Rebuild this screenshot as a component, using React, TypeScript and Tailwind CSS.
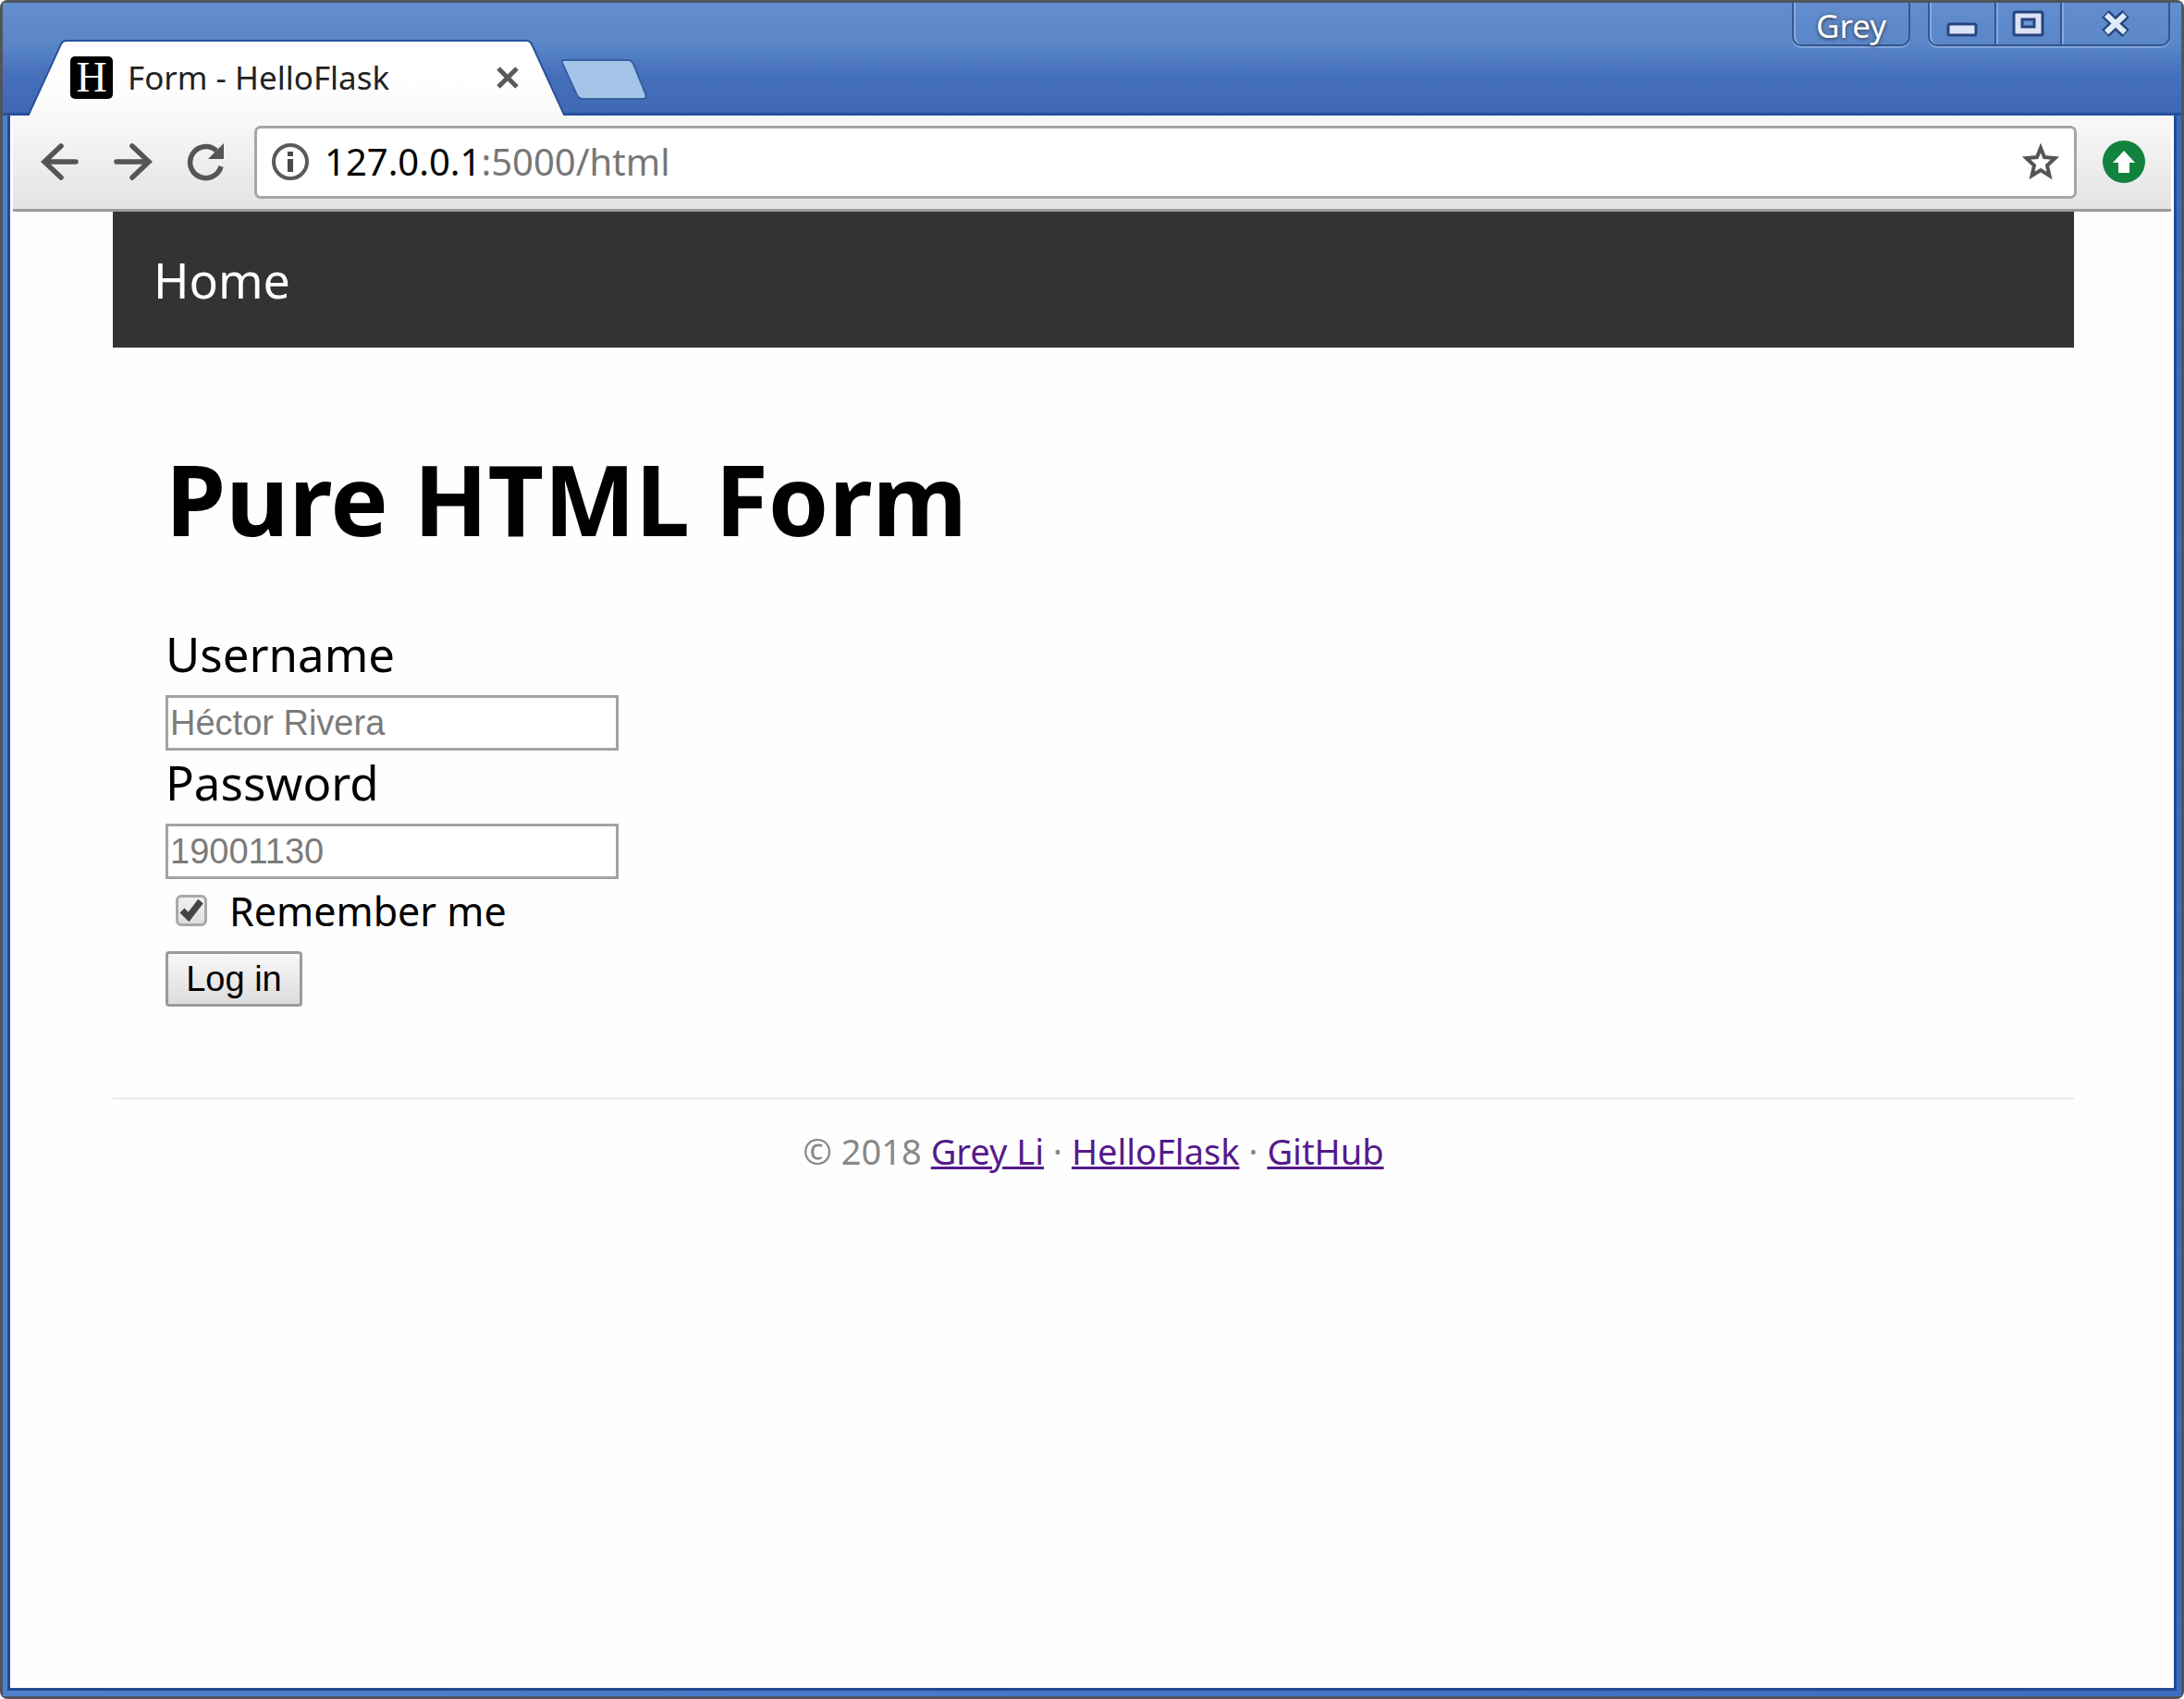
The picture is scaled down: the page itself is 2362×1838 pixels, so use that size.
import { useState } from "react";

const sans = "font-['Noto_Sans','Open_Sans',sans-serif]";

function TabShape() {
  return (
    <svg
      className="absolute inset-0 h-full w-full"
      viewBox="0 0 584 82"
      preserveAspectRatio="none"
      aria-hidden="true"
    >
      <defs>
        <linearGradient id="tabFill" x1="0" y1="0" x2="0" y2="1">
          <stop offset="0" stopColor="#ffffff" />
          <stop offset="0.5" stopColor="#ffffff" />
          <stop offset="1" stopColor="#f9f9f9" />
        </linearGradient>
      </defs>
      <path
        d="M2 82 L36 7 Q38 2 43 2 H540 Q545 2 547 7 L582 82 Z"
        fill="url(#tabFill)"
      />
      <path
        d="M0 81 H2 L36 7 Q38 1 43 1 H540 Q545 1 547 7 L581 81 H584"
        fill="none"
        stroke="#27519c"
        strokeWidth="2"
      />
    </svg>
  );
}

function Tab() {
  return (
    <div className="relative flex h-[82px] w-[584px] items-center pl-[47px] pr-[50px]">
      <TabShape />
      <span className="relative flex size-[46px] shrink-0 items-center justify-center rounded-[5px] bg-black font-['Liberation_Serif',serif] text-[46px] leading-[46px] text-white">
        H
      </span>
      <span className="relative ml-4 flex-1 whitespace-nowrap text-[35px] leading-[46px] text-[#222]">
        Form - HelloFlask
      </span>
      <button type="button" aria-label="Close tab" className="relative">
        <svg className="size-[28px]" viewBox="0 0 28 28" fill="none" stroke="#5a5a5a" strokeWidth="5">
          <path d="M4 4 L24 24 M24 4 L4 24" />
        </svg>
      </button>
    </div>
  );
}

function TitleBar() {
  return (
    <header className="flex h-[122px] items-end justify-between bg-[linear-gradient(#628ecf_0%,#5b87c9_35%,#446fba_65%,#4069b5_97%,#27519c_98%)] pl-[26px] pr-[12px]">
      <div className="flex items-end">
        <Tab />
        <button type="button" aria-label="New tab" className="mb-4 -ml-2">
          <svg className="h-[46px] w-[96px]" viewBox="0 0 96 46">
            <path
              d="M5 2 H74 Q78 2 80 6 L93 38 Q95 44 90 44 H26 Q21 44 19 40 L3 5 Q2 2 5 2 Z"
              fill="#a4c5e8"
              stroke="#34609f"
              strokeWidth="2"
            />
          </svg>
        </button>
      </div>
      <div className="flex items-start gap-[19px] self-start">
        <button
          type="button"
          className="h-[47px] w-[128px] rounded-b-[10px] border-2 border-t-0 border-[#34568f] pt-[5px] text-[35px] leading-[40px] text-white shadow-[0_2px_0_#7fa5dc,inset_2px_0_0_#86aae0] [text-shadow:0_1px_4px_#2c2c2c]"
        >
          Grey
        </button>
        <div className="flex h-[47px] rounded-b-[10px] border-2 border-t-0 border-[#34568f] shadow-[0_2px_0_#7fa5dc,inset_2px_0_0_#86aae0]">
          <button type="button" aria-label="Minimize" className="flex w-[70px] justify-center pt-[21px]">
            <svg className="h-[16px] w-[34px]" viewBox="0 0 34 16">
              <rect x="2" y="2" width="30" height="12" rx="2" fill="#dce3f6" stroke="#26457f" strokeWidth="3" />
            </svg>
          </button>
          <button
            type="button"
            aria-label="Maximize"
            className="flex w-[71px] justify-center border-l-2 border-[#34568f] pt-[8px] shadow-[inset_2px_0_0_#86aae0]"
          >
            <svg className="h-[29px] w-[35px]" viewBox="0 0 35 29">
              <rect x="2" y="2" width="31" height="25" rx="2" fill="#dce3f6" stroke="#26457f" strokeWidth="3" />
              <rect x="11" y="10" width="13" height="8" fill="#6b99d6" stroke="#26457f" strokeWidth="3" />
            </svg>
          </button>
          <button
            type="button"
            aria-label="Close"
            className="flex w-[117px] justify-center border-l-2 border-[#34568f] pt-[8px] shadow-[inset_2px_0_0_#86aae0]"
          >
            <svg className="h-[29px] w-[34px]" viewBox="0 0 34 29" fill="none">
              <path d="M6 4 L28 25 M28 4 L6 25" stroke="#26457f" strokeWidth="11" />
              <path d="M7 5 L27 24 M27 5 L7 24" stroke="#dcebf8" strokeWidth="6" />
            </svg>
          </button>
        </div>
      </div>
    </header>
  );
}

function Toolbar() {
  return (
    <div className="mx-[3px] flex h-[104px] items-center border-b-[3px] border-[#9b9b9b] bg-[linear-gradient(#f9f9f9,#e3e3e3)] pb-px pl-[29px] pr-[27px]">
      <nav className="flex gap-[35px]" aria-label="Browser">
        <button type="button" aria-label="Back">
          <svg
            className="size-[44px]"
            viewBox="0 0 44 44"
            fill="none"
            stroke="#555"
            strokeWidth="5.5"
            strokeLinecap="round"
          >
            <path d="M39 22 H6 M23 5 L5 22 L23 39" />
          </svg>
        </button>
        <button type="button" aria-label="Forward">
          <svg
            className="size-[44px]"
            viewBox="0 0 44 44"
            fill="none"
            stroke="#555"
            strokeWidth="5.5"
            strokeLinecap="round"
          >
            <path d="M4 22 H37 M21 5 L39 22 L21 39" />
          </svg>
        </button>
        <button type="button" aria-label="Reload">
          <svg className="size-[44px]" viewBox="0 0 44 44" fill="none">
            <path d="M33 10 A17 17 0 1 0 38 27" stroke="#555" strokeWidth="5.5" />
            <path d="M41 2 V19 H24 Z" fill="#555" />
          </svg>
        </button>
      </nav>
      <div className="ml-[30px] flex h-[79px] flex-1 items-center rounded-[7px] border-[3px] border-[#a5a5a5] bg-white pl-[15px] pr-[15px]">
        <svg className="size-[42px]" viewBox="0 0 42 42" fill="none">
          <circle cx="21" cy="21" r="18" stroke="#5a5a5a" strokeWidth="4" />
          <path d="M21 18 V32 M21 10 V15" stroke="#4a4a4a" strokeWidth="6" />
        </svg>
        <p className="ml-4 flex-1 text-[40px] leading-[54px] text-[#777]">
          <span className="text-black">127.0.0.1</span>:5000/html
        </p>
        <button type="button" aria-label="Bookmark this page">
          <svg className="size-[42px]" viewBox="0 0 42 42" fill="none" stroke="#555" strokeWidth="4">
            <path d="M21 6 L25 16 L36.500 17 L28 25 L30.500 36 L21 30 L11.500 36 L14 25 L5.500 17 L17 16 Z" />
          </svg>
        </button>
      </div>
      <button type="button" aria-label="Update" className="ml-[27px]">
        <svg className="size-[48px]" viewBox="0 0 48 48">
          <circle cx="24" cy="24" r="23" fill="#11833f" />
          <path d="M24 12 L36 25 H30 V36 H18 V25 H12 Z" fill="#fff" />
        </svg>
      </button>
    </div>
  );
}

function Field({ id, label, placeholder, type }: { id: string; label: string; placeholder: string; type: string }) {
  return (
    <div className="flex flex-col items-start">
      <label htmlFor={id} className="mb-[10px] text-[51px] leading-[69px]">
        {label}
      </label>
      <input
        id={id}
        type={type}
        placeholder={placeholder}
        className="h-[60px] w-[490px] border-[3px] border-[#a3a3a3] bg-white px-[2px] font-['Liberation_Sans',sans-serif] text-[38px] leading-[50px] outline-none placeholder:text-[#7b7b7b]"
      />
    </div>
  );
}

function LoginForm() {
  const [remember, setRemember] = useState(true);
  return (
    <form className="mt-[63px]" onSubmit={(e) => e.preventDefault()}>
      <Field id="username" label="Username" placeholder="Héctor Rivera" type="text" />
      <Field id="password" label="Password" placeholder="19001130" type="password" />
      <div className="flex h-[78px] items-center pb-[10px] pl-[11px]">
        <span className="relative size-[34px]">
          <input
            id="remember"
            type="checkbox"
            checked={remember}
            onChange={(e) => setRemember(e.target.checked)}
            className="block size-[34px] appearance-none rounded-[6px] border-[3px] border-[#a9a9a9] bg-[linear-gradient(#f0f0f0,#dedede)]"
          />
          {remember && (
            <svg className="pointer-events-none absolute inset-0" viewBox="0 0 34 34" fill="none">
              <path d="M7 17 L14 24 L27 7" stroke="#444" strokeWidth="7" />
            </svg>
          )}
        </span>
        <label htmlFor="remember" className="ml-6 text-[43px] leading-[57px]">
          Remember me
        </label>
      </div>
      <button
        type="submit"
        className="h-[60px] w-[148px] rounded-[4px] border-[3px] border-[#9b9b9b] bg-[linear-gradient(#f8f8f8,#dcdcdc)] font-['Liberation_Sans',sans-serif] text-[38px] leading-[50px]"
      >
        Log in
      </button>
    </form>
  );
}

export default function App() {
  return (
    <div className={`${sans} flex min-h-screen flex-col rounded-[8px] border-[3px] border-[#50545c] bg-[#4069b5] text-black`}>
      <TitleBar />
      <div className="flex flex-1 flex-col bg-[linear-gradient(90deg,#4f80cc,#3d6cbf)] px-[5px] pb-[6px]">
        <div className="flex flex-1 flex-col border-x-[3px] border-b-[3px] border-[#234b91] bg-[#fefefe]">
          <Toolbar />
          <div className="ml-[111px] mr-[108px]">
            <nav className="flex h-[147px] items-center bg-[#333] pl-[44px]">
              <a href="#home" className="text-[52px] leading-[70px] text-white">
                Home
              </a>
            </nav>
            <main className="px-[57px] pb-[98px] pt-[94px]">
              <h1 className="text-[105px] font-bold leading-[140px]">Pure HTML Form</h1>
              <LoginForm />
            </main>
            <footer className="border-t-[3px] border-[#efefef] pt-[30px] text-center text-[38px] leading-[50px] text-[#888]">
              © 2018{" "}
              <a href="#grey-li" className="text-[#551a8b] underline decoration-[3px]">
                Grey Li
              </a>{" "}
              ·{" "}
              <a href="#helloflask" className="text-[#551a8b] underline decoration-[3px]">
                HelloFlask
              </a>{" "}
              ·{" "}
              <a href="#github" className="text-[#551a8b] underline decoration-[3px]">
                GitHub
              </a>
            </footer>
          </div>
        </div>
      </div>
    </div>
  );
}
